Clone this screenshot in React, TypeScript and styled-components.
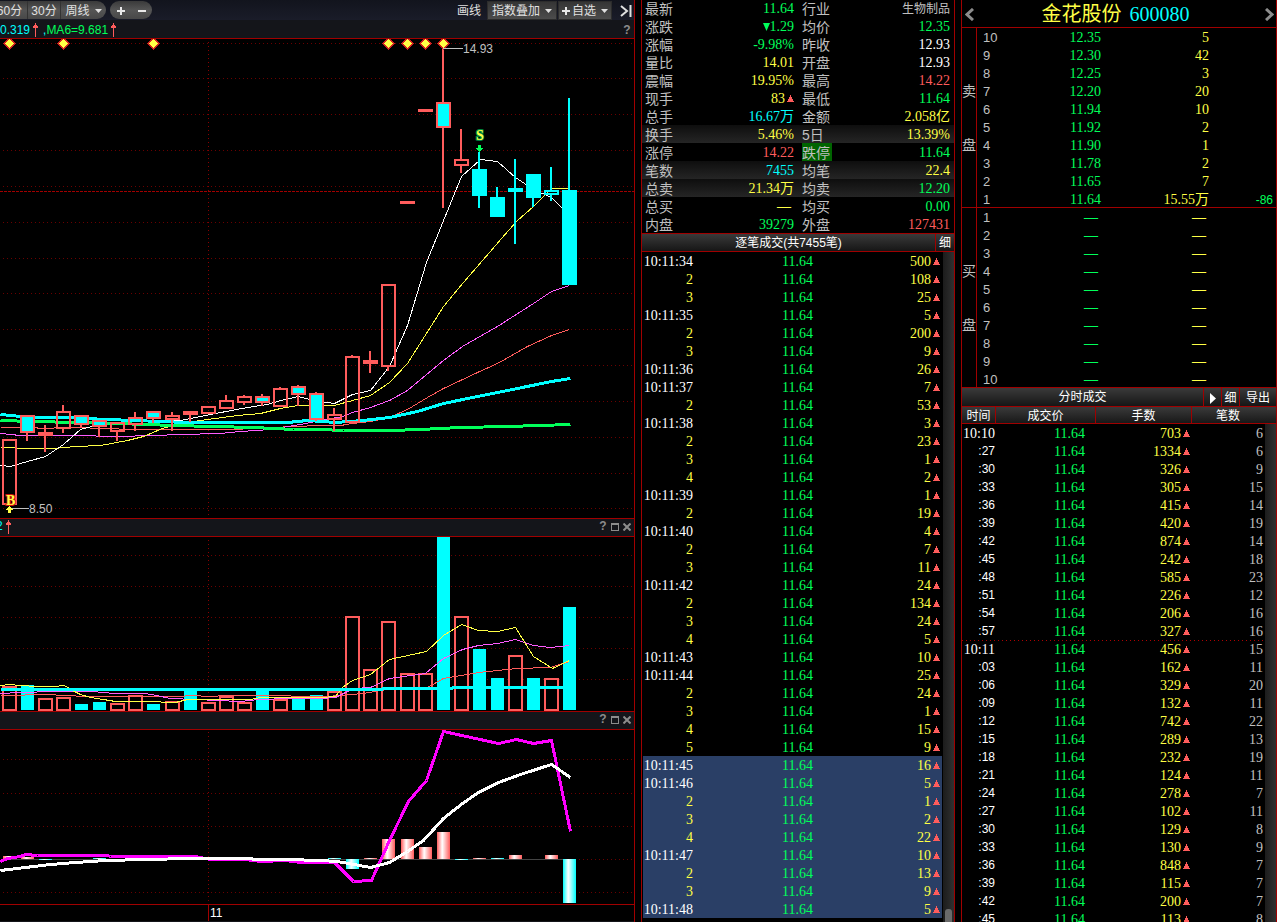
import React from 'react';
import styled, { createGlobalStyle, css } from 'styled-components';

const c = {
  line: '#a00000',
  red: '#ff5c5c',
  green: '#00ff5a',
  yellow: '#ffff45',
  cyan: '#00ffff',
  grey: '#c0c0c0',
  white: '#ffffff',
  magenta: '#ff5cff',
  bar: '#14151a',
};

const sans = '"Liberation Sans", "Noto Sans CJK SC", sans-serif';
const serif = '"Liberation Serif", "Noto Sans CJK SC", serif';

const GlobalStyle = createGlobalStyle`
  * { box-sizing: border-box; }
  body { margin: 0; background: #000; color: ${c.grey}; font: 12px/18px ${sans}; overflow: hidden; }
  button { margin: 0; padding: 0; border: 0; background: none; color: inherit; font: inherit; cursor: pointer; }
  table { border-collapse: separate; border-spacing: 0; table-layout: fixed; width: 100%; }
  td, th { padding: 0; font-weight: 400; }
`;

/* ---------- layout ---------- */

const Screen = styled.main`
  display: grid;
  grid-template-columns: minmax(0, 1fr) 314px 316px;
  column-gap: 6px;
  height: 100vh;
  overflow: hidden;
`;

const ChartColumn = styled.section`
  display: flex;
  flex-direction: column;
  min-height: 0;
  overflow: hidden;
  border-right: 1px solid ${c.line};
`;

const Panel = styled.section`
  display: flex;
  flex-direction: column;
  min-height: 0;
  overflow: hidden;
  border: solid ${c.line};
  border-width: 0 1px;
`;

/* ---------- toolbar ---------- */

const Toolbar = styled.div`
  display: flex;
  flex: none;
  align-items: center;
  height: 20px;
  padding-right: 2px;
  background: linear-gradient(#12141d, #1a1c29);
  color: #e0e0e0;
`;

const Pill = styled.div<{ $bleed?: boolean }>`
  display: flex;
  height: 18px;
  margin-left: ${(p) => (p.$bleed ? '-8px' : '4px')};
  border-radius: 9px;
  overflow: hidden;
  background: linear-gradient(#3a3a3a, #555 50%, #484848);
`;

const PillButton = styled.button<{ $w: number; $divided?: boolean }>`
  display: flex;
  align-items: center;
  justify-content: center;
  gap: 5px;
  width: ${(p) => p.$w}px;
  height: 18px;
  padding-top: 2px;
  line-height: 16px;
  white-space: nowrap;
  ${(p) => p.$divided && css`border-right: 1px solid #333;`}
`;

const ToolbarRight = styled.div`
  display: flex;
  align-items: center;
  gap: 1px;
  margin-left: auto;
`;

const PlainButton = styled.button`
  display: flex;
  align-items: center;
  height: 18px;
  padding: 2px 5px 0;
  line-height: 16px;
`;

const EdgeButton = styled(PlainButton)`
  padding: 1px 0 0 7px;
`;

const BoxButton = styled.button<{ $pad: number }>`
  display: flex;
  align-items: center;
  justify-content: center;
  gap: 5px;
  height: 19px;
  padding: 2px ${(p) => p.$pad}px 0;
  line-height: 15px;
  border: 1px solid #2c2c2c;
  background: linear-gradient(#353535, #4c4c4c);
  white-space: nowrap;
`;

const PlusLabel = styled.span`
  display: flex;
  align-items: center;
  gap: 2px;
`;

/* ---------- chart parts ---------- */

const InfoBar = styled.div<{ $top?: boolean }>`
  display: flex;
  flex: none;
  align-items: center;
  height: 19px;
  padding: ${(p) => (p.$top ? '0 3px 2px 0' : '2px 3px 0 0')};
  line-height: 15px;
  background: ${c.bar};
  border-bottom: 1px solid ${c.line};
  ${(p) => p.$top && css`border-top: 1px solid ${c.line};`}
  overflow: hidden;
`;

const Readout = styled.span<{ $color: string; $cut?: boolean }>`
  color: ${(p) => p.$color};
  ${(p) => p.$cut && css`margin-left: -4px;`}
`;

const Trend = styled.svg`
  margin: 0 5px 0 3px;
`;

const InfoTools = styled.div`
  display: flex;
  align-items: center;
  gap: 4px;
  margin-left: auto;
  color: #8c8c8c;
`;

const ToolButton = styled.button`
  display: flex;
  align-items: center;
  justify-content: center;
  width: 8px;
  height: 15px;
  font-weight: 700;
`;

const Plot = styled.svg`
  display: block;
  flex: none;
  width: 100%;
  height: auto;
  shape-rendering: crispEdges;
  font: 12px ${sans};
`;

const Axis = styled.footer`
  display: flex;
  flex: none;
  height: 18px;
  border-top: 1px solid ${c.line};
  border-bottom: 1px solid ${c.bar};
  color: ${c.white};
  line-height: 16px;
`;

const AxisMark = styled.span`
  margin-left: calc(100% * 208 / 634);
  padding-left: 1px;
  border-left: 1px solid ${c.line};
`;

type Candle = {
  x: number;
  top: number;
  bottom: number;
  high: number;
  low: number;
  kind: 'up' | 'mixed' | 'flat' | 'down' | 'downHollow';
};

const candles: Candle[] = (
  [
    [2, 439, 505, 439, 505, 'up'],
    [20, 415, 433, 415, 441, 'mixed'],
    [38, 432, 436, 425, 452, 'flat'],
    [56, 411, 429, 405, 433, 'up'],
    [74, 415, 425, 415, 428, 'mixed'],
    [92, 420, 427, 420, 437, 'mixed'],
    [110, 422, 432, 422, 441, 'up'],
    [128, 417, 425, 412, 431, 'up'],
    [146, 411, 419, 411, 423, 'mixed'],
    [165, 415, 420, 412, 431, 'up'],
    [183, 411, 415, 411, 422, 'flat'],
    [201, 406, 414, 406, 414, 'up'],
    [219, 400, 409, 395, 409, 'up'],
    [237, 396, 403, 395, 405, 'up'],
    [255, 396, 403, 394, 406, 'mixed'],
    [273, 388, 407, 387, 407, 'up'],
    [291, 386, 395, 385, 406, 'mixed'],
    [309, 393, 420, 392, 421, 'mixed'],
    [327, 414, 420, 408, 431, 'up'],
    [345, 356, 423, 355, 423, 'up'],
    [363, 360, 364, 351, 373, 'flat'],
    [381, 284, 367, 284, 371, 'up'],
    [400, 201, 204, 201, 204, 'flat'],
    [418, 109, 112, 109, 112, 'flat'],
    [436, 102, 128, 49, 208, 'mixed'],
    [454, 159, 166, 129, 173, 'up'],
    [472, 169, 196, 152, 208, 'down'],
    [490, 197, 217, 187, 217, 'down'],
    [508, 188, 192, 159, 244, 'down'],
    [526, 174, 198, 174, 207, 'down'],
    [544, 190, 195, 167, 201, 'downHollow'],
    [562, 190, 285, 98, 285, 'down'],
  ] as [number, number, number, number, number, Candle['kind']][]
).map(([x, top, bottom, high, low, kind]) => ({ x, top, bottom, high, low, kind }));

const averages: { color: string; width: number; points: string }[] = [
  { color: c.red, width: 1, points: '0,427 34,427 40,428 67,427 110,428 127,429 233,429 253,428 293,426 320,425 340,425 352,423 370,421 389,417 407,409 427,397 443,388 477,372 497,363 527,346 551,335 569,329' },
  { color: c.magenta, width: 1, points: '0,433 20,435 73,435 117,436 153,435 180,434 220,433 240,431 270,429 300,424 320,420 342,416 352,412 370,407 389,400 407,390 443,360 462,346 497,326 533,303 551,291 569,285' },
  { color: c.yellow, width: 1, points: '0,447 10,447 20,448 53,448 75,446 100,445 127,440 143,436 162,428 180,423 207,419 237,415 260,413 280,408 297,405 334,405 352,400 370,395 389,382 407,363 443,306 463,282 508,230 517,220 533,206 551,188 569,188' },
  { color: c.white, width: 1, points: '0,465 10,466 20,463 45,456 63,444 80,429 99,424 127,421 180,420 200,416 215,413 247,407 267,404 280,400 298,396 313,400 334,403 352,394 370,390 389,366 407,325 426,262 439,230 461,176 480,159 497,161 515,177 533,189 551,197 562,208' },
  { color: c.green, width: 3, points: '0,420 33,421 117,423 173,425 213,426 253,427 293,429 320,429 343,430 390,430 420,429 460,427 507,426 570,424' },
  { color: c.cyan, width: 3, points: '0,414 10,415 33,417 63,417 107,419 160,421 187,422 287,422 307,420 335,422 362,420 389,417 417,411 443,403 477,396 507,390 551,381 570,378' },
];

type VolumeBar = [x: number, top: number, rising: boolean];

const volumes: VolumeBar[] = [
  [2, 686, true], [21, 685, false], [38, 698, true], [56, 697, true],
  [75, 704, false], [93, 702, false], [110, 703, true], [128, 695, true],
  [147, 704, false], [165, 701, true], [184, 690, false], [201, 702, true],
  [219, 696, true], [237, 702, true], [256, 690, false], [273, 699, true],
  [292, 698, false], [310, 695, false], [327, 691, true], [345, 616, true],
  [363, 669, true], [381, 621, true], [400, 673, true], [418, 673, true],
  [437, 536, false], [454, 616, true], [473, 649, false], [491, 678, false],
  [508, 655, true], [527, 678, false], [544, 678, true], [563, 607, false],
];

const volumeLines = [
  { color: c.red, width: 1, points: '0,695 20,695 30,694 50,694 60,695 90,696 180,696 190,695 210,696 225,695 285,695 295,696 327,696 363,693 387,689 427,687 443,678 478,672 516,668 550,667 569,661' },
  { color: c.magenta, width: 1, points: '0,693 20,692 54,691 90,691 104,692 113,693 145,693 156,695 170,698 195,699 240,701 258,699 290,698 320,698 335,697 353,688 370,687 389,678 425,673 443,658 462,649 478,645 497,643 515,639 533,645 550,647 569,645' },
  { color: c.yellow, width: 1, points: '0,685 9,684 20,685 37,686 54,686 64,685 72,690 80,694 90,697 103,699 115,701 145,701 175,702 187,699 250,699 260,697 320,697 335,696 342,687 352,680 370,674 389,659 426,651 443,635 461,624 478,630 497,631 515,627 533,656 552,668 569,660' },
  { color: c.cyan, width: 3, points: '0,689 380,689 384,688 450,688 454,687 569,687' },
];

const macdBars: [number, number, number, boolean][] = [
  [3, 856, 859, true], [21, 857, 859, true], [39, 859, 860, false],
  [93, 858, 859, false], [328, 858, 859, false], [346, 859, 869, false],
  [364, 858, 859, true], [382, 839, 859, true], [401, 839, 859, true],
  [419, 847, 859, true], [437, 832, 859, true], [455, 859, 860, false],
  [473, 858, 859, true], [491, 858, 859, false], [509, 855, 859, true],
  [545, 855, 859, true], [563, 859, 903, false],
];

const macdLines = [
  { color: '#ff00ff', width: 3, points: '0,861 7,858 20,856 25,854 37,855 107,855 110,856 195,856 210,859 245,859 260,861 285,860 300,862 334,862 353,881 371,880 389,840 408,801 426,780 443,731 498,743 516,739 533,743 551,740 570,831' },
  { color: c.white, width: 3, points: '0,870 25,867 50,864 75,862 105,860 145,859 190,858 215,858 287,859 320,860 337,861 370,867 389,862 407,851 423,840 443,818 462,803 478,792 498,782 520,774 551,764 570,777' },
];

function Grid({ rows, from, to }: { rows: number[]; from: number; to: number }) {
  return (
    <g stroke="#6a0000" strokeDasharray="1 3">
      {rows.map((y) => (
        <path key={y} d={`M3 ${y}.5H634`} />
      ))}
      <path stroke="#8a0000" d={`M208.5 ${from}V${to}`} />
    </g>
  );
}

function Lines({ data }: { data: { color: string; width: number; points: string }[] }) {
  return (
    <g fill="none" transform="translate(0.5 0.5)">
      {data.map((l) => (
        <polyline key={l.color} points={l.points} stroke={l.color} strokeWidth={l.width} />
      ))}
    </g>
  );
}

function CandleShape({ x, top, bottom, high, low, kind }: Candle) {
  const falling = kind === 'down' || kind === 'downHollow';
  const color = falling ? c.cyan : c.red;
  const solid = kind === 'down' || kind === 'flat';
  const fill = kind === 'mixed' ? c.cyan : 'none';
  return (
    <g>
      {high < top && <rect x={x + 6} y={high} width="2" height={top - high} fill={color} />}
      {low > bottom && <rect x={x + 6} y={bottom} width="2" height={low - bottom} fill={color} />}
      {solid ? (
        <rect x={x} y={top} width="15" height={bottom - top} fill={color} />
      ) : (
        <rect x={x + 1} y={top + 1} width="13" height={bottom - top - 2} fill={fill} stroke={color} strokeWidth="2" />
      )}
    </g>
  );
}

function PriceChart() {
  return (
    <Plot viewBox="0 39 634 479" role="img" aria-label="K线图">
      <Grid rows={[43, 78, 114, 150, 186, 222, 258, 293, 329, 365, 401, 437, 473, 508]} from={42} to={518} />
      <path d="M0 191.5H634" stroke={c.line} strokeDasharray="3 1" />
      <Lines data={averages} />
      {candles.map((k) => (
        <CandleShape key={k.x} {...k} />
      ))}
      {[9, 63, 153, 388, 407, 425, 443].map((x) => (
        <path key={x} d={`M${x + 0.5} 38l5.5 5.5l-5.5 5.5l-5.5 -5.5z`} fill={c.yellow} stroke="#d02020" strokeWidth="1" />
      ))}
      <path d="M443 48.5H463M10 508.5H29" stroke={c.grey} />
      <g fill={c.grey}>
        <text x="463" y="53">14.93</text>
        <text x="29" y="513">8.50</text>
      </g>
      <g fontFamily="Liberation Serif, serif" fontWeight="700" fontSize="14" paintOrder="stroke" strokeWidth="2">
        <text x="476" y="140" fill={c.yellow} stroke="#008a40">S</text>
        <text x="6" y="505" fill={c.yellow} stroke="#d01010">B</text>
      </g>
      <path d="M478 145h3v3h2v1h-1v1h-1v1h-1v1h-1v-1h-1v-1h-1v-1h-1v-1h2z" fill={c.green} />
      <path d="M9 506h1v1h1v1h1v1h1v1h-2v3h-3v-3h-2v-1h1v-1h1v-1h1z" fill={c.yellow} />
    </Plot>
  );
}

function VolumeChart() {
  return (
    <Plot viewBox="0 537 634 174" role="img" aria-label="成交量">
      <Grid rows={[555, 586, 617, 648, 679]} from={540} to={711} />
      {volumes.map(([x, top, rising]) =>
        rising ? (
          <rect key={x} x={x + 1} y={top + 1} width="13" height={709 - top} fill="#000" stroke={c.red} strokeWidth="2" />
        ) : (
          <rect key={x} x={x} y={top} width="13" height={710 - top} fill={c.cyan} />
        ),
      )}
      <Lines data={volumeLines} />
    </Plot>
  );
}

function MacdChart() {
  return (
    <Plot viewBox="0 730 634 174" role="img" aria-label="MACD">
      <defs>
        <linearGradient id="rise">
          <stop offset="0" stopColor={c.red} />
          <stop offset="0.4" stopColor="#fff" />
          <stop offset="1" stopColor={c.red} />
        </linearGradient>
        <linearGradient id="fall">
          <stop offset="0" stopColor={c.cyan} />
          <stop offset="0.4" stopColor="#fff" />
          <stop offset="1" stopColor={c.cyan} />
        </linearGradient>
      </defs>
      <Grid rows={[759, 793, 826, 859, 892]} from={732} to={904} />
      <path d="M3 859.5H570" stroke="#444" />
      {macdBars.map(([x, top, bottom, rising]) => (
        <rect key={x} x={x} y={top} width="13" height={bottom - top} fill={rising ? 'url(#rise)' : 'url(#fall)'} />
      ))}
      <Lines data={macdLines} />
    </Plot>
  );
}

function UpArrow() {
  return (
    <Trend width="5" height="14" viewBox="0 0 5 14" shapeRendering="crispEdges" fill={c.red}>
      <path d="M2 0h1v2h1v1h1v2H3v9H2V5H0V3h1V2h1z" />
    </Trend>
  );
}

function Caret() {
  return (
    <svg width="7" height="4" viewBox="0 0 7 4" fill="#e0e0e0">
      <path d="M0 0h7L3.5 4z" />
    </svg>
  );
}

function Plus() {
  return (
    <svg width="8" height="8" viewBox="0 0 8 8" fill="#e8e8e8">
      <path d="M3 0h2v3h3v2H5v3H3V5H0V3h3z" />
    </svg>
  );
}

function WindowTools() {
  return (
    <InfoTools>
      <ToolButton aria-label="帮助">?</ToolButton>
      <ToolButton aria-label="最大化">
        <svg width="8" height="8" viewBox="0 0 8 8" fill="currentColor" shapeRendering="crispEdges">
          <path fillRule="evenodd" d="M0 0h8v8H0zM1 2h6v5H1z" />
        </svg>
      </ToolButton>
      <ToolButton aria-label="关闭">
        <svg width="8" height="8" viewBox="0 0 8 8" stroke="currentColor" strokeWidth="2">
          <path d="M.5 .5l7 7M7.5 .5l-7 7" />
        </svg>
      </ToolButton>
    </InfoTools>
  );
}

/* ---------- data tables ---------- */

const cellBox = css`
  height: 18px;
  padding-top: 2px;
  line-height: 16px;
  white-space: nowrap;
`;

const Cell = styled.td<{ $color?: string; $pad?: number; $small?: boolean; $empty?: boolean }>`
  ${cellBox}
  padding-right: ${(p) => p.$pad ?? 0}px;
  color: ${(p) => p.$color ?? c.grey};
  font-family: ${(p) => (p.$small ? sans : serif)};
  font-size: ${(p) => (p.$small ? 12 : 14)}px;
  font-weight: ${(p) => (p.$empty ? 700 : 400)};
  text-align: right;
`;

const SecondCell = styled(Cell)`
  padding-top: 0;
  line-height: 18px;
`;

const StatsTable = styled.table`
  flex: none;
  margin-top: -1px;
`;

const StatsRow = styled.tr<{ $shade?: boolean }>`
  ${(p) => p.$shade && css`background: linear-gradient(#0e0e0e, #252525);`}
`;

const StatName = styled.th<{ $second?: boolean }>`
  ${cellBox}
  padding-left: ${(p) => (p.$second ? 8 : 3)}px;
  font-size: 14px;
  text-align: left;
`;

const LimitName = styled(StatName)`
  padding-top: 0;
`;

const LimitTag = styled.span`
  display: inline-block;
  height: 18px;
  padding: 2px 2px 0 0;
  background: #006400;
  vertical-align: top;
`;

const Bar = styled.div`
  display: flex;
  flex: none;
  height: 19px;
  border: solid ${c.line};
  border-width: 1px 0;
  background: linear-gradient(#3a3a3a, #161616);
  color: ${c.white};
`;

const BarTitle = styled.h2`
  flex: 1;
  margin: 0;
  padding-top: 2px;
  font: inherit;
  line-height: 15px;
  text-align: center;
`;

const BarButton = styled.button<{ $w: number }>`
  display: flex;
  align-items: center;
  justify-content: center;
  width: ${(p) => p.$w}px;
  padding-top: 2px;
  border-left: 1px solid ${c.line};
  line-height: 15px;
`;

const ListArea = styled.div<{ $inset?: boolean }>`
  display: flex;
  flex: 1;
  min-height: 0;
  overflow: hidden;
  ${(p) => p.$inset && css`gap: 1px; padding-left: 1px;`}
`;

const ListBody = styled.div`
  flex: 1;
  min-width: 0;
  overflow: hidden;
`;

const ScrollTrack = styled.div`
  display: flex;
  flex-direction: column;
  justify-content: flex-end;
  align-items: center;
  width: 11px;
  background: linear-gradient(90deg, #1c1c1c, #303030);
`;

const ScrollThumb = styled.div`
  width: 7px;
  height: 13px;
  border-radius: 3px 3px 0 0;
  background: #6a6a6a;
`;

const TickRow = styled.tr<{ $active?: boolean; $minute?: boolean }>`
  ${(p) => p.$active && css`background: #2a3f66;`}
  ${(p) => p.$minute && css`
    background: repeating-linear-gradient(90deg, #b00000 0 1px, transparent 1px 4px) top / 100% 1px no-repeat;
  `}
`;

const Mark = styled.svg`
  margin-left: 2px;
  vertical-align: 1px;
`;

function Up() {
  return (
    <Mark width="7" height="7" viewBox="0 0 7 7" fill={c.red} shapeRendering="crispEdges">
      <path d="M3 0h1v2h1v2h1v2h1v1H0V6h1V4h1V2h1z" />
    </Mark>
  );
}

function Down() {
  return (
    <svg width="7" height="8" viewBox="0 0 7 8" fill={c.green}>
      <path d="M0 0h7L3.5 8z" />
    </svg>
  );
}

type Stat = [string, React.ReactNode, string];

const stats: [Stat, Stat, boolean?][] = [
  [['最新', '11.64', c.green], ['行业', '生物制品', c.grey]],
  [['涨跌', <><Down />1.29</>, c.green], ['均价', '12.35', c.green]],
  [['涨幅', '-9.98%', c.green], ['昨收', '12.93', c.white]],
  [['量比', '14.01', c.yellow], ['开盘', '12.93', c.white]],
  [['震幅', '19.95%', c.yellow], ['最高', '14.22', c.red]],
  [['现手', <>83<Up /></>, c.yellow], ['最低', '11.64', c.green]],
  [['总手', '16.67万', c.cyan], ['金额', '2.058亿', c.yellow]],
  [['换手', '5.46%', c.yellow], ['5日', '13.39%', c.yellow], true],
  [['涨停', '14.22', c.red], ['跌停', '11.64', c.green]],
  [['笔数', '7455', c.cyan], ['均笔', '22.4', c.yellow], true],
  [['总卖', '21.34万', c.yellow], ['均卖', '12.20', c.green], true],
  [['总买', '—', c.yellow], ['均买', '0.00', c.green]],
  [['内盘', '39279', c.green], ['外盘', '127431', c.red]],
];

const ticks: [string, number][] = [
  ['10:11:34', 500], ['2', 108], ['3', 25], ['10:11:35', 5], ['2', 200], ['3', 9],
  ['10:11:36', 26], ['10:11:37', 7], ['2', 53], ['10:11:38', 3], ['2', 23], ['3', 1],
  ['4', 2], ['10:11:39', 1], ['2', 19], ['10:11:40', 4], ['2', 7], ['3', 11],
  ['10:11:42', 24], ['2', 134], ['3', 24], ['4', 5], ['10:11:43', 10], ['10:11:44', 25],
  ['2', 24], ['3', 1], ['4', 15], ['5', 9], ['10:11:45', 16], ['10:11:46', 5],
  ['2', 1], ['3', 2], ['4', 22], ['10:11:47', 10], ['2', 13], ['3', 9], ['10:11:48', 5],
];
const firstActiveTick = 28;

function StatsPanel() {
  return (
    <Panel>
      <StatsTable>
        <colgroup>
          <col width="50" />
          <col width="102" />
          <col width="60" />
          <col />
        </colgroup>
        <tbody>
          {stats.map(([a, b, shade]) => (
            <StatsRow key={a[0]} $shade={shade}>
              <StatName scope="row">{a[0]}</StatName>
              <Cell $color={a[2]} $pad={a[1] === '—' ? 3 : 0} $empty={a[1] === '—'}>{a[1]}</Cell>
              {b[0] === '跌停' ? (
                <LimitName scope="row" $second><LimitTag>{b[0]}</LimitTag></LimitName>
              ) : (
                <StatName scope="row" $second>{b[0]}</StatName>
              )}
              <Cell $color={b[2]} $pad={4} $small={b[0] === '行业'}>{b[1]}</Cell>
            </StatsRow>
          ))}
        </tbody>
      </StatsTable>
      <Bar>
        <BarTitle>逐笔成交(共7455笔)</BarTitle>
        <BarButton $w={19}>细</BarButton>
      </Bar>
      <ListArea $inset>
        <ListBody>
          <table>
            <colgroup>
              <col width="50" />
              <col width="120" />
              <col />
            </colgroup>
            <tbody>
              {ticks.map(([time, volume], i) => (
                <TickRow key={i} $active={i >= firstActiveTick}>
                  <Cell $color={time.length > 1 ? c.white : c.yellow}>{time}</Cell>
                  <Cell $color={c.green}>11.64</Cell>
                  <Cell $color={c.yellow} $pad={2}>{volume}<Up /></Cell>
                </TickRow>
              ))}
            </tbody>
          </table>
        </ListBody>
        <ScrollTrack><ScrollThumb /></ScrollTrack>
      </ListArea>
    </Panel>
  );
}

/* ---------- order book ---------- */

const StockHeader = styled.header`
  display: flex;
  flex: none;
  align-items: center;
  justify-content: space-between;
  height: 28px;
  padding: 2px 2px 0 3px;
  border-bottom: 1px solid ${c.line};
  color: #8c8c8c;
`;

const StepButton = styled.button`
  display: flex;
`;

const StockTitle = styled.h1`
  display: flex;
  gap: 8px;
  margin: 0;
  padding-right: 8px;
  font: 20px/25px ${serif};
  color: ${c.yellow};
`;

const StockCode = styled.span`
  color: ${c.cyan};
`;

const Side = styled.div`
  display: flex;
  flex: none;
  height: 180px;
  border-bottom: 1px solid ${c.line};
`;

const SideName = styled.div`
  display: flex;
  flex-direction: column;
  align-items: center;
  justify-content: center;
  gap: 36px;
  width: 15px;
  border-right: 1px solid ${c.line};
  font-size: 14px;
`;

const Level = styled.th`
  ${cellBox}
  padding-left: 6px;
  font-size: 13px;
  text-align: left;
`;

const Head = styled.th`
  height: 17px;
  padding-top: 2px;
  border-right: 1px solid ${c.line};
  border-bottom: 1px solid ${c.line};
  line-height: 14px;
  text-align: center;
  &:last-child { border-right: 0; padding-right: 12px; }
`;

const HeadTable = styled.table`
  flex: none;
  background: linear-gradient(#3a3a3a, #161616);
  color: ${c.white};
`;

const asks: [number, string, string, string?][] = [
  [10, '12.35', '5'], [9, '12.30', '42'], [8, '12.25', '3'], [7, '12.20', '20'],
  [6, '11.94', '10'], [5, '11.92', '2'], [4, '11.90', '1'], [3, '11.78', '2'],
  [2, '11.65', '7'], [1, '11.64', '15.55万', '-86'],
];
const bids: [number, string, string, string?][] = [1, 2, 3, 4, 5, 6, 7, 8, 9, 10].map((n) => [n, '—', '—']);

const minutes: [string, number, number][] = [
  ['10:10', 703, 6], [':27', 1334, 6], [':30', 326, 9], [':33', 305, 15], [':36', 415, 14],
  [':39', 420, 19], [':42', 874, 14], [':45', 242, 18], [':48', 585, 23], [':51', 226, 12],
  [':54', 206, 16], [':57', 327, 16], ['10:11', 456, 15], [':03', 162, 11], [':06', 329, 20],
  [':09', 132, 11], [':12', 742, 22], [':15', 289, 13], [':18', 232, 19], [':21', 124, 11],
  [':24', 278, 7], [':27', 102, 11], [':30', 129, 8], [':33', 130, 9], [':36', 848, 7],
  [':39', 115, 7], [':42', 200, 7], [':45', 113, 8],
];

function BookSide({ name, rows }: { name: string; rows: [number, string, string, string?][] }) {
  return (
    <Side>
      <SideName>
        <span>{name}</span>
        <span>盘</span>
      </SideName>
      <ListBody>
        <table>
          <colgroup>
            <col width="40" />
            <col width="84" />
            <col width="108" />
            <col />
          </colgroup>
          <tbody>
            {rows.map(([level, price, amount, change]) => {
              const empty = price === '—';
              return (
                <tr key={level}>
                  <Level scope="row">{level}</Level>
                  <Cell $color={c.green} $pad={empty ? 3 : 0} $empty={empty}>{price}</Cell>
                  <Cell $color={c.yellow} $pad={empty ? 3 : 0} $empty={empty}>{amount}</Cell>
                  <Cell $color={c.green} $pad={3} $small>{change}</Cell>
                </tr>
              );
            })}
          </tbody>
        </table>
      </ListBody>
    </Side>
  );
}

const MinuteBar = styled(Bar)`
  border-top: 0;
`;

function BookPanel() {
  return (
    <Panel>
      <StockHeader>
        <StepButton aria-label="上一只">
          <svg width="9" height="13" viewBox="0 0 9 13" fill="none" stroke="currentColor" strokeWidth="3">
            <path d="M8 1L2 6.5L8 12" />
          </svg>
        </StepButton>
        <StockTitle>金花股份 <StockCode>600080</StockCode></StockTitle>
        <StepButton aria-label="下一只">
          <svg width="9" height="13" viewBox="0 0 9 13" fill="none" stroke="currentColor" strokeWidth="3">
            <path d="M1 1L7 6.5L1 12" />
          </svg>
        </StepButton>
      </StockHeader>
      <BookSide name="卖" rows={asks} />
      <BookSide name="买" rows={bids} />
      <MinuteBar>
        <BarTitle>分时成交</BarTitle>
        <BarButton $w={18} aria-label="展开">
          <svg width="6" height="11" viewBox="0 0 6 11" fill="#fff">
            <path d="M0 0l6 5.5L0 11z" />
          </svg>
        </BarButton>
        <BarButton $w={18}>细</BarButton>
        <BarButton $w={37}>导出</BarButton>
      </MinuteBar>
      <HeadTable>
        <colgroup>
          <col width="34" />
          <col width="100" />
          <col width="96" />
          <col />
        </colgroup>
        <thead>
          <tr>
            <Head>时间</Head>
            <Head>成交价</Head>
            <Head>手数</Head>
            <Head>笔数</Head>
          </tr>
        </thead>
      </HeadTable>
      <ListArea>
        <ListBody>
          <table>
            <colgroup>
              <col width="33" />
              <col width="90" />
              <col width="106" />
              <col />
            </colgroup>
            <tbody>
              {minutes.map(([time, volume, count], i) => (
                <TickRow key={i} $minute={time === '10:11'}>
                  {time[0] === ':' ? (
                    <SecondCell $color={c.white} $small>{time}</SecondCell>
                  ) : (
                    <Cell $color={c.white}>{time}</Cell>
                  )}
                  <Cell $color={c.green}>11.64</Cell>
                  <Cell $color={c.yellow} $pad={1}>{volume}<Up /></Cell>
                  <Cell $pad={2}>{count}</Cell>
                </TickRow>
              ))}
            </tbody>
          </table>
        </ListBody>
        <ScrollTrack />
      </ListArea>
    </Panel>
  );
}

export default function App() {
  return (
    <>
      <GlobalStyle />
      <Screen>
        <ChartColumn>
          <Toolbar>
            <Pill $bleed>
              <PillButton $w={36} $divided>60分</PillButton>
              <PillButton $w={33} $divided>30分</PillButton>
              <PillButton $w={45}>周线<Caret /></PillButton>
            </Pill>
            <Pill>
              <PillButton $w={21} aria-label="放大"><Plus /></PillButton>
              <PillButton $w={21} aria-label="缩小">
                <svg width="8" height="2" viewBox="0 0 8 2" fill="#e8e8e8"><path d="M0 0h8v2H0z" /></svg>
              </PillButton>
            </Pill>
            <ToolbarRight>
              <PlainButton>画线</PlainButton>
              <BoxButton $pad={4}>指数叠加<Caret /></BoxButton>
              <BoxButton $pad={3}><PlusLabel><Plus />自选</PlusLabel><Caret /></BoxButton>
              <EdgeButton aria-label="收起">
                <svg width="12" height="12" viewBox="0 0 12 12" fill="none" stroke="#e0e0e0" strokeWidth="2">
                  <path d="M1 1l6 5l-6 5M10.5 0v12" />
                </svg>
              </EdgeButton>
            </ToolbarRight>
          </Toolbar>
          <InfoBar>
            <Readout $color={c.cyan}>0.319</Readout>
            <UpArrow />
            <Readout $color={c.cyan}>,</Readout>
            <Readout $color={c.green}>MA6=9.681</Readout>
            <UpArrow />
            <InfoTools>
              <ToolButton aria-label="帮助">?</ToolButton>
            </InfoTools>
          </InfoBar>
          <PriceChart />
          <InfoBar $top>
            <Readout $color={c.cyan} $cut>2</Readout>
            <UpArrow />
            <WindowTools />
          </InfoBar>
          <VolumeChart />
          <InfoBar $top>
            <WindowTools />
          </InfoBar>
          <MacdChart />
          <Axis>
            <AxisMark>11</AxisMark>
          </Axis>
        </ChartColumn>
        <StatsPanel />
        <BookPanel />
      </Screen>
    </>
  );
}
